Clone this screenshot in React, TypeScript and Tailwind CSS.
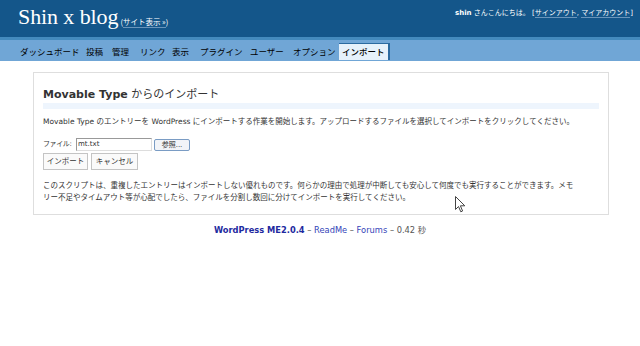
import React from "react";

const jp = { fontFamily: '"DejaVu Sans", "Noto Sans CJK JP", sans-serif' };
const cjk = { fontFamily: '"Noto Sans CJK JP", sans-serif' };

const navItems: [string, number][] = [
  ["ダッシュボード", 66],
  ["投稿", 26],
  ["管理", 28],
  ["リンク", 32],
  ["表示", 28],
  ["プラグイン", 50],
  ["ユーザー", 43],
  ["オプション", 46],
];

export default function App() {
  return (
    <div className="relative w-[640px] h-[346px] bg-white overflow-hidden text-[#333]">
      <header className="h-[37px] bg-[#14568a] flex justify-between">
        <div className="pl-[18px] pt-[3px] flex items-start">
          <span
            className="text-[22px] leading-[28px] text-white tracking-[-0.1px]"
            style={{ fontFamily: '"Liberation Serif", "DejaVu Serif", serif' }}
          >
            Shin x blog
          </span>
          <span className="ml-[2px] mt-[13px] text-[7.5px] leading-[11px] text-white whitespace-nowrap" style={cjk}>
            (<span className="border-b border-[#6a95bb]">サイト表示 »</span>)
          </span>
        </div>
        <div className="pt-[8px] pr-[7px] text-[7px] leading-[10px] text-white whitespace-nowrap" style={jp}>
          <span className="font-bold">shin</span> さんこんにちは。 [
          <span className="border-b border-[#6a95bb]">サインアウト</span>,{" "}
          <span className="border-b border-[#6a95bb]">マイアカウント</span>]
        </div>
      </header>
      <nav className="border-t-[3px] border-[#448abd] bg-[#70a6d6] h-[24px] flex items-center pl-[20px]" style={cjk}>
        {navItems.map(([t, w]) => (
          <span key={t} className="text-[8.5px] leading-[12px] text-black shrink-0 whitespace-nowrap" style={{ width: w }}>
            {t}
          </span>
        ))}
        <span className="h-[17px] mt-[1px] px-[3px] flex items-center bg-[#e6f1fb] border-t border-[#2b6aa0] border-r-2 text-[8.5px] font-medium text-black whitespace-nowrap">
          インポート
        </span>
      </nav>

      <div className="ml-[33px] w-[576px] mt-[11px] border border-[#dedede] pt-[13px] px-[9px] pb-[10px]" style={jp}>
        <h2 className="text-[11px] leading-[14px] pb-[1px] border-b-[6px] border-[#eef5fd] text-[#333] whitespace-nowrap">
          <span className="font-semibold" style={{ fontFamily: '"DejaVu Sans", sans-serif' }}>
            Movable Type
          </span>{" "}
          <span style={cjk}>からのインポート</span>
        </h2>
        <p className="mt-[7px] text-[7.5px] leading-[12px] whitespace-nowrap">
          Movable Type のエントリーを WordPress にインポートする作業を開始します。アップロードするファイルを選択してインポートをクリックしてください。
        </p>
        <div className="mt-[10px] flex items-center h-[13px] text-[7.5px] whitespace-nowrap">
          <span className="w-[33px] text-[7px] tracking-[-0.4px]">ファイル:</span>
          <span className="w-[76px] h-[13px] border border-[#999] border-r-[#ddd] border-b-[#ddd] bg-white text-[7px] leading-[11px] pl-[1px] text-[#333]">
            mt.txt
          </span>
          <span className="ml-[2px] w-[36px] h-[12px] rounded-[2px] border border-[#7a9cc4] bg-[#f2f4f8] text-[7px] leading-[10px] text-center">
            参照...
          </span>
        </div>
        <div className="mt-[2px] flex gap-[3px] text-[7.5px] whitespace-nowrap">
          <span className="w-[45px] h-[17px] border border-[#c4c4c4] bg-[#fafafa] flex items-center justify-center">
            インポート
          </span>
          <span className="w-[47px] h-[17px] border border-[#c4c4c4] bg-[#fafafa] flex items-center justify-center">
            キャンセル
          </span>
        </div>
        <p className="mt-[10px] text-[7.5px] leading-[12px] whitespace-nowrap">
          このスクリプトは、重複したエントリーはインポートしない優れものです。何らかの理由で処理が中断しても安心して何度でも実行することができます。メモ
          <br />
          リー不足やタイムアウト等が心配でしたら、ファイルを分割し数回に分けてインポートを実行してください。
        </p>
      </div>

      <div className="mt-[9px] text-center text-[8.3px] leading-[12px] whitespace-nowrap" style={jp}>
        <span className="font-bold text-[#1e2aa0]">WordPress ME2.0.4</span>
        <span className="text-[#555]"> – </span>
        <span className="text-[#3344b8]">ReadMe</span>
        <span className="text-[#555]"> – </span>
        <span className="text-[#3344b8]">Forums</span>
        <span className="text-[#555]"> – 0.42 秒</span>
      </div>

      <svg className="absolute left-[455px] top-[196px]" width="11" height="17" viewBox="0 0 11 17">
        <path d="M0.5 0.5 L0.5 13.5 L3.5 10.5 L5.8 15.8 L7.6 15 L5.4 9.8 L9.8 9.8 Z" fill="#fff" stroke="#444" strokeWidth="1" strokeLinejoin="round" />
      </svg>
    </div>
  );
}
